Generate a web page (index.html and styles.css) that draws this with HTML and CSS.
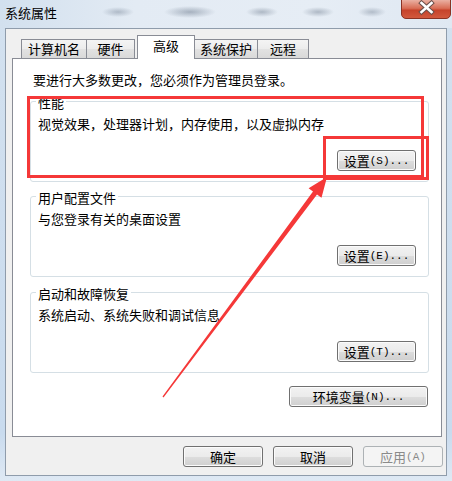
FILE: index.html
```html
<!DOCTYPE html>
<html lang="zh-CN">
<head>
<meta charset="utf-8">
<title>系统属性</title>
<link rel="stylesheet" href="styles.css">
</head>
<body>
<div class="window">
  <div class="titlebar">
    <span class="title">系统属性</span>
    <div class="close">
      <svg width="50" height="19" viewBox="0 0 50 19">
        <defs>
          <linearGradient id="cg" x1="0" y1="0" x2="0" y2="1">
            <stop offset="0" stop-color="#eab0a2"/>
            <stop offset="0.45" stop-color="#d86d55"/>
            <stop offset="0.55" stop-color="#c6432b"/>
            <stop offset="1" stop-color="#d35a3e"/>
          </linearGradient>
        </defs>
        <path d="M0.5 0 V14 a4.5 4.5 0 0 0 4.5 4.5 H45 a4.5 4.5 0 0 0 4.5 -4.5 V0" fill="url(#cg)" stroke="#8a3324"/>
        <path d="M20.5 3 L30.5 12 M30.5 3 L20.5 12" stroke="#6b4f4a" stroke-width="4.6" stroke-linecap="square"/>
        <path d="M20.5 3 L30.5 12 M30.5 3 L20.5 12" stroke="#ffffff" stroke-width="2.6" stroke-linecap="square"/>
      </svg>
    </div>
  </div>
  <div class="client">
    <div class="tabs">
      <div class="tab t1">计算机名</div>
      <div class="tab t2">硬件</div>
      <div class="tab sel">高级</div>
      <div class="tab t4">系统保护</div>
      <div class="tab t5">远程</div>
    </div>
    <div class="panel">
      <p class="intro">要进行大多数更改，您必须作为管理员登录。</p>
      <div class="group g1">
        <div class="gtitle">性能</div>
        <div class="gdesc">视觉效果，处理器计划，内存使用，以及虚拟内存</div>
        <button class="btn set">设置<span class="mn">(S)...</span></button>
      </div>
      <div class="group g2">
        <div class="gtitle">用户配置文件</div>
        <div class="gdesc">与您登录有关的桌面设置</div>
        <button class="btn set">设置<span class="mn">(E)...</span></button>
      </div>
      <div class="group g3">
        <div class="gtitle">启动和故障恢复</div>
        <div class="gdesc">系统启动、系统失败和调试信息</div>
        <button class="btn set">设置<span class="mn">(T)...</span></button>
      </div>
      <button class="btn env">环境变量<span class="mn">(N)...</span></button>
    </div>
    <div class="actions">
      <button class="btn act">确定</button>
      <button class="btn act">取消</button>
      <button class="btn act" disabled>应用<span class="mn">(A)</span></button>
    </div>
  </div>
</div>
<svg class="annot" width="452" height="481" viewBox="0 0 452 481">
  <rect x="28.5" y="97.5" width="394" height="79" fill="none" stroke="#f53838" stroke-width="3"/>
  <rect x="324.5" y="137.5" width="103" height="41" fill="none" stroke="#f53838" stroke-width="3"/>
  <polygon points="162.5,396.6 313.0,191.6 308.6,188.3 327,177 321.5,197.8 317.0,194.5 163.5,397.4" fill="#f53838"/>
</svg>
</body>
</html>
```

FILE: styles.css
```css
* {
  box-sizing: border-box;
}

html,
body {
  margin: 0;
  padding: 0;
}

body {
  width: 452px;
  height: 481px;
  overflow: hidden;
  position: relative;
  background: linear-gradient(#d3e1ef, #c9dbee 90%, #dfe9f4);
  font-family: "Noto Sans CJK SC", "Noto Sans", sans-serif;
  font-size: 13px;
  color: #000;
}

.window {
  display: flex;
  flex-direction: column;
}

.titlebar {
  height: 28px;
  display: flex;
  align-items: flex-start;
  background:
    radial-gradient(ellipse 16px 5px at 118px 12px, rgba(100, 115, 135, 0.40), transparent),
    radial-gradient(ellipse 26px 6px at 190px 12px, rgba(90, 105, 125, 0.45), transparent),
    radial-gradient(ellipse 16px 5px at 262px 12px, rgba(90, 105, 125, 0.40), transparent),
    radial-gradient(ellipse 16px 5px at 318px 12px, rgba(90, 105, 125, 0.40), transparent),
    radial-gradient(ellipse 14px 5px at 372px 12px, rgba(90, 105, 125, 0.36), transparent),
    linear-gradient(90deg, #d2e0ee, #e3ebf4 30%, #e6edf5 70%, #dfe8f2);
}

.title {
  margin-left: 5px;
  margin-top: 4px;
  line-height: 17px;
  font-size: 13px;
}

.close {
  margin-left: auto;
  margin-right: 1px;
  width: 50px;
  height: 19px;
  display: flex;
}

.client {
  margin-left: 5px;
  width: 442px;
  height: 448px;
  border: 1px solid #8f9cab;
  background: #f0f0f0;
  padding: 6px 3px 0 6px;
  display: flex;
  flex-direction: column;
}

.tabs {
  display: flex;
  align-items: flex-end;
  height: 23px;
  margin-left: 9px;
  position: relative;
  z-index: 1;
}

.tab {
  height: 19px;
  border: 1px solid #898c95;
  border-bottom: none;
  line-height: 17px;
  text-align: center;
  background: linear-gradient(#f4f4f4, #ececec 50%, #e2e2e2 51%, #d9d9d9);
  white-space: nowrap;
}

.t1 { width: 66px; }
.t2 { width: 48px; border-left: none; }
.sel {
  width: 58px;
  height: 24px;
  margin-left: 2px;
  margin-bottom: -1px;
  line-height: 19px;
  background: #fff;
}
.t4 { width: 63px; border-left: none; }
.t5 { width: 51px; border-left: none; }

.panel {
  width: 430px;
  height: 379px;
  border: 1px solid #898c95;
  background: #fff;
  padding: 13px 12px 0 17px;
  display: flex;
  flex-direction: column;
}

.intro {
  margin: 0 0 0 3px;
  line-height: 15px;
  white-space: nowrap;
}

.group {
  width: 399px;
  height: 81px;
  border: 1px solid #d5dfe5;
  border-radius: 3px;
  padding: 0 12px 0 7px;
  display: flex;
  flex-direction: column;
  box-shadow: inset 1px 1px 0 #fff;
}

.g1 { margin-top: 14px; }
.g2 { margin-top: 14px; }
.g3 { margin-top: 15px; }

.gtitle {
  align-self: flex-start;
  margin-top: -7px;
  margin-left: -2px;
  padding: 0 2px;
  background: #fff;
  line-height: 15px;
  white-space: nowrap;
}

.gdesc {
  margin-top: 6px;
  line-height: 15px;
  white-space: nowrap;
}

.btn {
  height: 21px;
  padding: 0;
  border: 1px solid #707070;
  border-radius: 3px;
  background: linear-gradient(#f2f2f2, #ebebeb 50%, #dddddd 51%, #cfcfcf);
  box-shadow: inset 0 0 0 1px #fbfbfb;
  font-family: "Noto Sans CJK SC", "Noto Sans", sans-serif;
  font-size: 13px;
  line-height: 18px;
  color: #000;
  white-space: nowrap;
  display: flex;
  align-items: center;
  justify-content: center;
}

.mn {
  font-family: "Liberation Mono", "DejaVu Sans Mono", monospace;
  font-size: 11px;
}

.set {
  width: 79px;
  margin-top: auto;
  margin-bottom: 10px;
  align-self: flex-end;
}

.env {
  width: 139px;
  margin-top: 13px;
  margin-right: 1px;
  align-self: flex-end;
}

.actions {
  margin-top: 9px;
  display: flex;
  justify-content: flex-end;
  gap: 10px;
}

.act {
  width: 80px;
}

.act:disabled {
  border-color: #adb2b5;
  background: #f4f4f4;
  box-shadow: none;
  color: #8a8a8a;
}

.annot {
  position: absolute;
  left: 0;
  top: 0;
  pointer-events: none;
}
```
